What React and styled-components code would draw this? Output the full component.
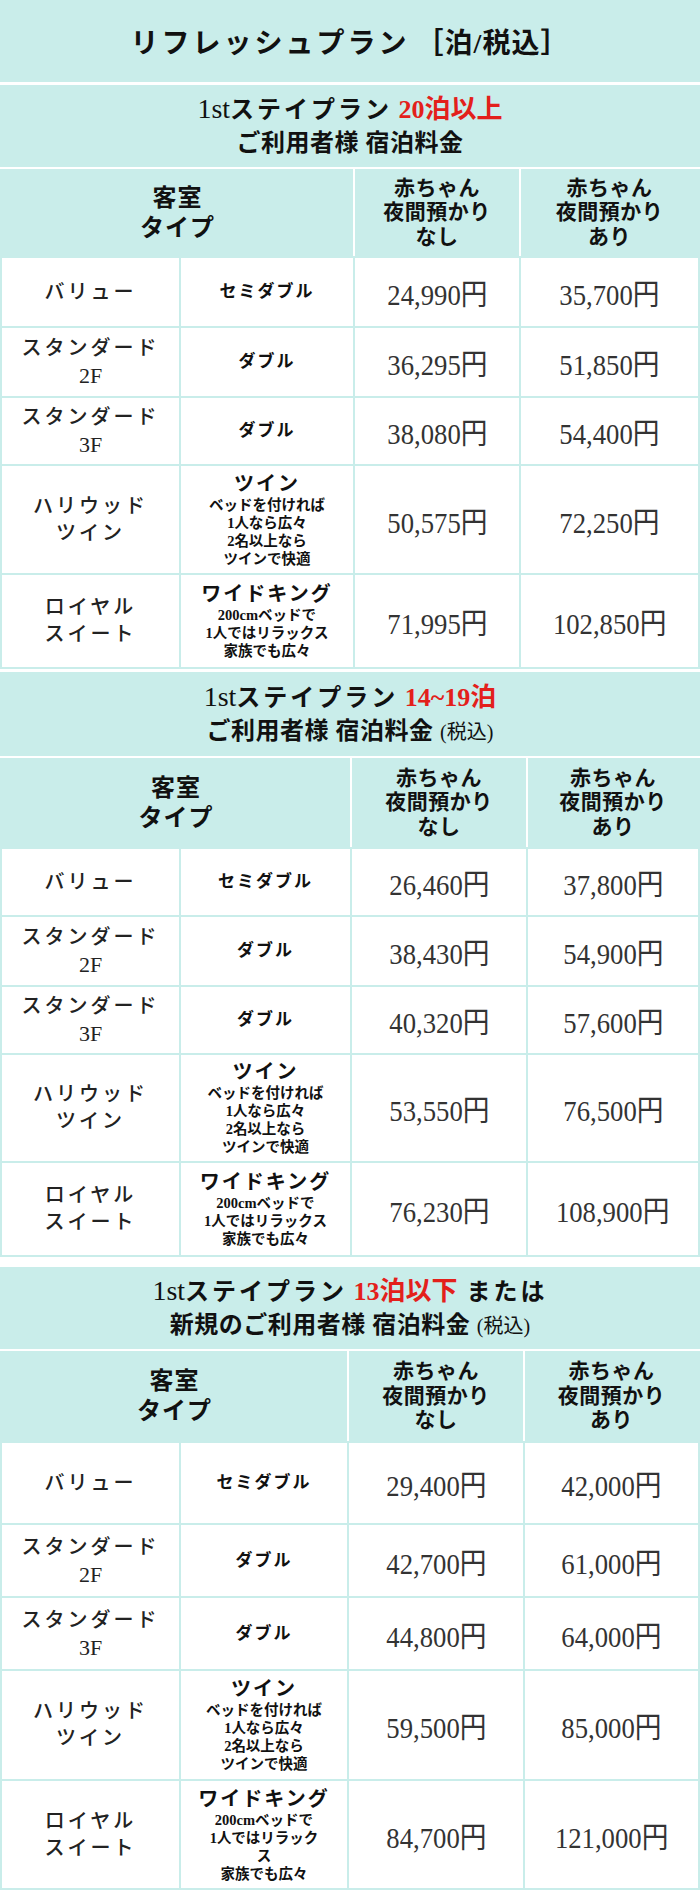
import styled, { createGlobalStyle } from 'styled-components';

const TEAL = '#c9edea';

const GlobalStyle = createGlobalStyle`
   body {
      margin: 0;
      background: #fff;
      font-family: "Liberation Serif", "Noto Sans CJK JP", serif;
      color: #111;
   }
`;

const twinNotes = ['ベッドを付ければ', '1人なら広々', '2名以上なら', 'ツインで快適'];
const kingNotes = ['200cmベッドで', '1人ではリラックス', '家族でも広々'];
const kingNotesWrapped = ['200cmベッドで', '1人ではリラック', 'ス', '家族でも広々'];

const rooms = [
   { name: ['バリュー'], bed: 'セミダブル' },
   { name: ['スタンダード', '2F'], bed: 'ダブル' },
   { name: ['スタンダード', '3F'], bed: 'ダブル' },
   { name: ['ハリウッド', 'ツイン'], bed: 'ツイン', notes: twinNotes },
   { name: ['ロイヤル', 'スイート'], bed: 'ワイドキング', notes: kingNotes },
];

const plans = [
   {
      gap: 3,
      head: 82,
      red: '20泊以上',
      rest: '',
      line2: 'ご利用者様 宿泊料金',
      small: '',
      cols: '177px 172px 164px 177px',
      headerH: 87,
      rows: [68, 68, 66, 107, 92],
      prices: [
         ['24,990円', '35,700円'],
         ['36,295円', '51,850円'],
         ['38,080円', '54,400円'],
         ['50,575円', '72,250円'],
         ['71,995円', '102,850円'],
      ],
   },
   {
      gap: 3,
      head: 84,
      red: '14~19泊',
      rest: '',
      line2: 'ご利用者様 宿泊料金 ',
      small: '(税込)',
      cols: '177px 169px 174px 170px',
      headerH: 89,
      rows: [66, 68, 66, 106, 92],
      prices: [
         ['26,460円', '37,800円'],
         ['38,430円', '54,900円'],
         ['40,320円', '57,600円'],
         ['53,550円', '76,500円'],
         ['76,230円', '108,900円'],
      ],
   },
   {
      gap: 10,
      head: 82,
      red: '13泊以下',
      rest: ' または',
      line2: '新規のご利用者様 宿泊料金 ',
      small: '(税込)',
      cols: '177px 166px 174px 173px',
      headerH: 90,
      rows: [80, 71, 71, 108, 107],
      wrapKing: true,
      prices: [
         ['29,400円', '42,000円'],
         ['42,700円', '61,000円'],
         ['44,800円', '64,000円'],
         ['59,500円', '85,000円'],
         ['84,700円', '121,000円'],
      ],
   },
];

const App = () => {
   return (
      <>
         <GlobalStyle />
         <Page>
            <TitleBand>
               リフレッシュプラン<Bracket>［泊/税込］</Bracket>
            </TitleBand>
            {plans.map((plan, i) => (
               <PlanSection key={i} $gap={plan.gap}>
                  <PlanHeading $h={plan.head}>
                     <HeadLine>
                        <Latin>1st</Latin>
                        <Kana>ステイプラン</Kana> <Red>{plan.red}</Red>
                        {plan.rest && <Kana>{plan.rest}</Kana>}
                     </HeadLine>
                     <HeadLine>
                        {plan.line2}
                        {plan.small && <Small>{plan.small}</Small>}
                     </HeadLine>
                  </PlanHeading>
                  <HeaderGrid $cols={plan.cols} $h={plan.headerH}>
                     <HeadCell $span={2} $big>
                        <span>客室</span>
                        <span>タイプ</span>
                     </HeadCell>
                     <HeadCell>
                        <span>赤ちゃん</span>
                        <span>夜間預かり</span>
                        <span>なし</span>
                     </HeadCell>
                     <HeadCell>
                        <span>赤ちゃん</span>
                        <span>夜間預かり</span>
                        <span>あり</span>
                     </HeadCell>
                  </HeaderGrid>
                  <BodyGrid
                     $cols={plan.cols}
                     $rows={plan.rows.map((r) => `${r}px`).join(' ')}
                  >
                     {rooms.map((room, r) => {
                        const notes =
                           room.bed === 'ワイドキング' && plan.wrapKing
                              ? kingNotesWrapped
                              : room.notes;
                        return [
                           <RoomCell key={`n${r}`}>
                              {room.name.map((n) => (
                                 <RoomLine key={n} $floor={/F$/.test(n)}>
                                    {n}
                                 </RoomLine>
                              ))}
                           </RoomCell>,
                           <BedCell key={`b${r}`}>
                              <BedName $lg={!!notes}>{room.bed}</BedName>
                              {notes &&
                                 notes.map((n) => <Note key={n}>{n}</Note>)}
                           </BedCell>,
                           <PriceCell key={`p${r}a`}>
                              <Price>{plan.prices[r][0]}</Price>
                           </PriceCell>,
                           <PriceCell key={`p${r}b`}>
                              <Price>{plan.prices[r][1]}</Price>
                           </PriceCell>,
                        ];
                     })}
                  </BodyGrid>
               </PlanSection>
            ))}
         </Page>
      </>
   );
};

const Page = styled.main`
   width: 700px;
   display: flex;
   flex-direction: column;
`;

const TitleBand = styled.h1`
   margin: 0;
   height: 82px;
   background: ${TEAL};
   display: flex;
   align-items: center;
   justify-content: center;
   font-size: 28px;
   font-weight: 700;
   letter-spacing: 3px;
   color: #111;
   white-space: pre;
`;

const Bracket = styled.span`
   margin-left: 6px;
   letter-spacing: 1px;
`;

const PlanSection = styled.section`
   margin-top: ${(p) => p.$gap}px;
   display: flex;
   flex-direction: column;
`;

const PlanHeading = styled.h2`
   margin: 0;
   height: ${(p) => p.$h}px;
   background: ${TEAL};
   display: flex;
   flex-direction: column;
   align-items: center;
   justify-content: center;
   font-size: 24px;
   line-height: 33px;
   font-weight: 700;
   color: #111;
`;

const HeadLine = styled.span`
   white-space: pre;
   letter-spacing: 0.5px;
`;

const Latin = styled.span`
   font-size: 28px;
   font-weight: 400;
   letter-spacing: 0;
`;

const Kana = styled.span`
   letter-spacing: 3px;
`;

const Red = styled.span`
   color: #e3201b;
   font-size: 26px;
   letter-spacing: 0;
`;

const Small = styled.span`
   font-size: 20px;
   font-weight: 400;
   letter-spacing: 0;
`;

const HeaderGrid = styled.div`
   margin-top: 2px;
   height: ${(p) => p.$h}px;
   display: grid;
   grid-template-columns: ${(p) => p.$cols};
   column-gap: 2px;
   background: #fff;
   border-left: 2px solid ${TEAL};
   border-right: 2px solid ${TEAL};
`;

const HeadCell = styled.div`
   grid-column: span ${(p) => p.$span || 1};
   background: ${TEAL};
   display: flex;
   flex-direction: column;
   align-items: center;
   justify-content: center;
   font-size: ${(p) => (p.$big ? 24 : 21)}px;
   line-height: ${(p) => (p.$big ? 30 : 24.5)}px;
   font-weight: 700;
   letter-spacing: ${(p) => (p.$big ? 1 : 0.5)}px;
   color: #111;
`;

const BodyGrid = styled.div`
   display: grid;
   grid-template-columns: ${(p) => p.$cols};
   grid-template-rows: ${(p) => p.$rows};
   gap: 2px;
   background: ${TEAL};
   padding: 2px;
`;

const Cell = styled.div`
   background: #fff;
   display: flex;
   flex-direction: column;
   align-items: center;
   justify-content: center;
   text-align: center;
`;

const RoomCell = styled(Cell)`
   font-size: 20px;
   line-height: 27px;
   font-weight: 500;
   color: #222;
`;

const RoomLine = styled.span`
   letter-spacing: ${(p) => (p.$floor ? 0 : 3)}px;
   font-size: ${(p) => (p.$floor ? 22 : 20)}px;
`;

const BedCell = styled(Cell)`
   color: #111;
`;

const BedName = styled.div`
   font-size: ${(p) => (p.$lg ? 20 : 17)}px;
   line-height: 24px;
   font-weight: 700;
   letter-spacing: 2px;
`;

const Note = styled.div`
   font-size: 14.5px;
   line-height: 18px;
   font-weight: 700;
`;

const PriceCell = styled(Cell)`
   color: #333;
`;

const Price = styled.span`
   display: inline-block;
   font-size: 29px;
   transform: scaleX(0.92);
`;

export default App;
